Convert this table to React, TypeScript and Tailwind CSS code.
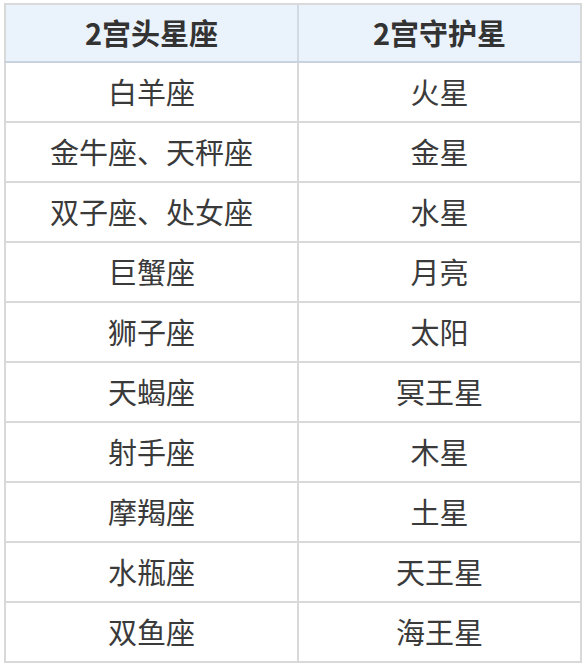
const rows: [string, string][] = [
  ['白羊座', '火星'],
  ['金牛座、天秤座', '金星'],
  ['双子座、处女座', '水星'],
  ['巨蟹座', '月亮'],
  ['狮子座', '太阳'],
  ['天蝎座', '冥王星'],
  ['射手座', '木星'],
  ['摩羯座', '土星'],
  ['水瓶座', '天王星'],
  ['双鱼座', '海王星'],
]

export default function App() {
  return (
    <div
      className="w-[586px] h-[668px] bg-white pt-[3px] pl-[4px]"
      style={{ fontFamily: '"Noto Sans CJK SC", "Noto Sans", sans-serif' }}
    >
      <table className="border-collapse border-2 border-[#d9d9d9] text-[29px] text-[#3a3a3a] table-fixed w-[578px]">
        <thead>
          <tr className="bg-[#eaf2fb] h-[58px]">
            <th className="w-[293px] font-bold text-[#333] border-r-2 border-[#d2d9e2] border-b-2 border-b-[#c9d3de]">2宫头星座</th>
            <th className="font-bold text-[#333] border-b-2 border-b-[#c9d3de]">2宫守护星</th>
          </tr>
        </thead>
        <tbody>
          {rows.map(([a, b], i) => (
            <tr key={i} className="h-[60px] border-t-2 border-[#d9d9d9] first:border-t-0">
              <td className="text-center border-r-2 border-[#d9d9d9]">{a}</td>
              <td className="text-center">{b}</td>
            </tr>
          ))}
        </tbody>
      </table>
    </div>
  )
}
